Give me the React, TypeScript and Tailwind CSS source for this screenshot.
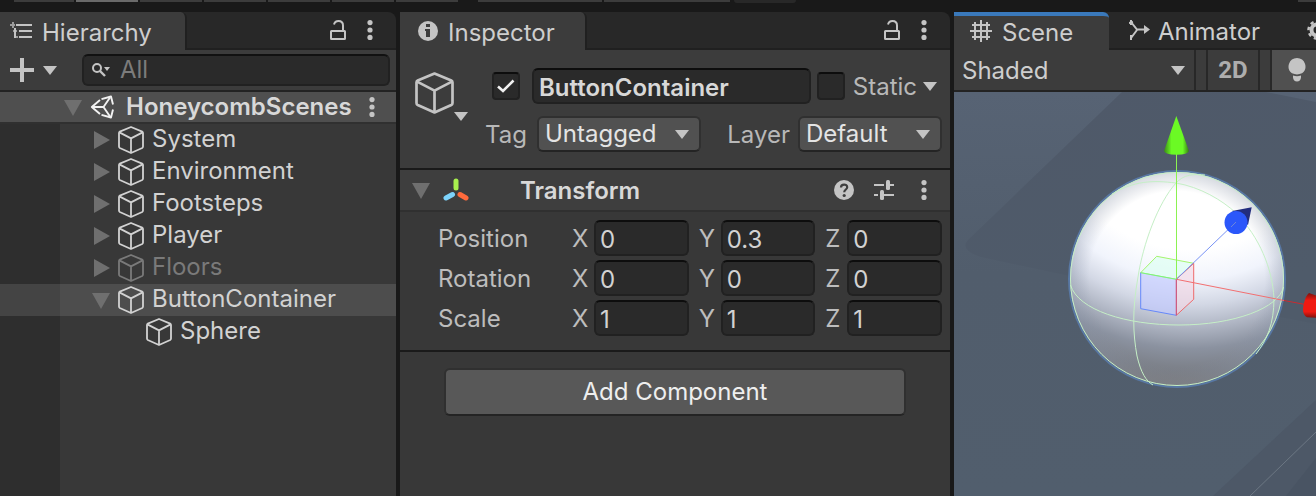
import { useState, type ReactNode } from "react";

const cx = (...names: string[]) => names.join(" ");

function CaretDown({ className = "" }: { className?: string }) {
  return (
    <svg viewBox="0 0 14 9" className={cx("h-[9px] w-[14px] shrink-0", className)} fill="#c4c4c4" aria-hidden="true">
      <path d="M0 0h14L7 9z" />
    </svg>
  );
}

function Foldout({ open, label, onClick }: { open: boolean; label: string; onClick?: () => void }) {
  return (
    <button type="button" aria-label={`Toggle ${label}`} aria-expanded={open} onClick={onClick} className="flex h-5 w-[18px] shrink-0 items-center justify-center">
      <svg viewBox="0 0 18 20" className="h-5 w-[18px]" fill="#6f6f6f" aria-hidden="true">
        {open ? <path d="M0 3h18L9 19z" /> : <path d="M2 1v18l16-9z" />}
      </svg>
    </button>
  );
}

function CubeIcon({ className }: { className: string }) {
  return (
    <svg viewBox="0 0 26 28" className={cx("shrink-0", className)} fill="none" stroke="currentColor" strokeWidth="1.8" strokeLinejoin="round" aria-hidden="true">
      <path d="M13 1 L24.2 5.6 Q25 6 25 7 V20.6 Q25 21.6 24.2 22 L13 27 L1.8 22 Q1 21.6 1 20.6 V7 Q1 6 1.8 5.6 Z" />
      <path d="M1.4 6.4 L13 12.4 L24.6 6.4 M13 12.4 V27" />
    </svg>
  );
}

function LockIcon() {
  return (
    <svg viewBox="0 0 16 20" className="h-5 w-4" fill="none" stroke="#c4c4c4" strokeWidth="2" aria-hidden="true">
      <rect x="1" y="11" width="14" height="8" rx="0.5" />
      <path d="M4 4.5C4.6 2 6.200 1 8.500 1C11.500 1 13 3 13 5.500V11" />
    </svg>
  );
}

function DotsIcon() {
  return (
    <svg viewBox="0 0 6 20" className="h-5 w-[6px]" fill="#c4c4c4" aria-hidden="true">
      <circle cx="3" cy="2.600" r="2.600" />
      <circle cx="3" cy="10" r="2.600" />
      <circle cx="3" cy="17.400" r="2.600" />
    </svg>
  );
}

function UnityLogo() {
  return (
    <svg viewBox="0 0 24 24" className="h-6 w-6 shrink-0" fill="none" stroke="#f2f2f2" strokeWidth="1.900" strokeLinejoin="round" aria-hidden="true">
      <path d="M10 5L1.800 12L10 19" />
      <path d="M11.500 4.200L21 1.500L23 9.500M11.500 19.800L21 22.500L23 14.500" />
      <path d="M2 12H13.500M13.500 12L20 2.500M13.500 12L20 21.500" />
    </svg>
  );
}

function IconButton({ label, children }: { label: string; children: ReactNode }) {
  return (
    <button type="button" aria-label={label} className="flex items-center justify-center">
      {children}
    </button>
  );
}

function TabActions() {
  return (
    <div className="ml-auto flex items-center gap-[21px] pr-[23px]">
      <IconButton label="Lock panel"><LockIcon /></IconButton>
      <IconButton label="Panel menu"><DotsIcon /></IconButton>
    </div>
  );
}

const segments = [
  { width: "w-[60px]", color: "bg-[#3c3c3c]" },
  { width: "w-[62px]", color: "bg-[#6a6a6a]" },
  { width: "w-[62px]", color: "bg-[#3c3c3c]" },
  { width: "w-[62px]", color: "bg-[#3c3c3c]" },
  { width: "w-[62px]", color: "bg-[#3c3c3c]" },
  { width: "w-[62px]", color: "bg-[#3c3c3c]" },
  { width: "w-[62px]", color: "bg-[#3c3c3c]" },
];

function ToolbarEdge() {
  return (
    <div className="flex h-3 shrink-0 items-start gap-[2px] pl-[14px]">
      {segments.map((s, i) => (
        <div key={i} className={cx("h-[2px]", s.width, s.color)} />
      ))}
      <div className="ml-[18px] h-[2px] w-[124px] bg-[#3c3c3c]" />
      <div className="h-[2px] w-[126px] bg-[#3c3c3c]" />
      <div className="ml-[2px] h-[3px] w-[62px] rounded-b bg-[#282828]" />
      <div className="ml-auto h-[2px] w-[18px] bg-[#3c3c3c]" />
    </div>
  );
}

type Item = { name: string; open?: boolean; leaf?: boolean; dim?: boolean; selected?: boolean };

const items: Item[] = [
  { name: "System" },
  { name: "Environment" },
  { name: "Footsteps" },
  { name: "Player" },
  { name: "Floors", dim: true },
  { name: "ButtonContainer", open: true, selected: true },
  { name: "Sphere", leaf: true },
];

function Hierarchy() {
  return (
    <section aria-label="Hierarchy" className="flex min-w-0 flex-col">
      <div className="flex h-[38px] rounded-tr-lg bg-[#282828]">
        <h2 className="flex w-[187px] items-center gap-[10px] rounded-tr-md border-r-2 border-[#202020] bg-[#3c3c3c] pl-[10px]">
          <svg viewBox="0 0 22 18" className="h-[18px] w-[22px]" fill="#c4c4c4" aria-hidden="true">
            <path d="M6 2h16v2H6zM9 8h13v2H9zM9 14h13v2H9zM4 6h2v10H4z" />
            <path d="M0 2h5v2H0zM2 0h2v6H2zM3 8h4v2H3zM5 14h3v2H5z" fillOpacity="0.7" />
          </svg>
          <span className="pt-1">Hierarchy</span>
        </h2>
        <div className="flex flex-1 items-center border-b-2 border-[#202020]"><TabActions /></div>
      </div>
      <div className="flex h-[42px] items-center border-b-2 border-[#232323] bg-[#3c3c3c] pl-[10px] pr-[6px]">
        <button type="button" aria-label="Create" className="flex items-center gap-[9px]">
          <svg viewBox="0 0 24 24" className="h-6 w-6" fill="#c4c4c4" aria-hidden="true"><path d="M10 0h4v10h10v4H14v10h-4V14H0v-4h10z" /></svg>
          <CaretDown />
        </button>
        <label className="ml-[25px] flex h-8 min-w-0 flex-1 items-center gap-[10px] rounded-md border-2 border-[#212121] border-t-[#111111] bg-[#2a2a2a] pl-2">
          <svg viewBox="0 0 18 14" className="h-[14px] w-[18px] shrink-0" aria-hidden="true">
            <circle cx="5" cy="5" r="4" fill="none" stroke="#c4c4c4" strokeWidth="2" />
            <path d="M8 8l5 5" stroke="#c4c4c4" strokeWidth="2.400" />
            <path d="M12 4h6l-3 4z" fill="#c4c4c4" />
          </svg>
          <input type="search" aria-label="Search hierarchy" placeholder="All" className="w-full min-w-0 bg-transparent outline-none placeholder:text-[#7c7c7c]" />
        </label>
      </div>
      <div className="flex h-8 items-center border-b-2 border-[#303030] bg-[#4f4f4f] pl-16 pr-[21px]">
        <Foldout open label="HoneycombScenes" />
        <span className="ml-2"><UnityLogo /></span>
        <span className="ml-3 truncate font-semibold text-[#d8d8d8]">HoneycombScenes</span>
        <span className="ml-auto flex"><IconButton label="Scene menu"><DotsIcon /></IconButton></span>
      </div>
      <ul className="flex flex-1 flex-col bg-[linear-gradient(to_right,#2e2e2e_60px,#383838_60px)]">
        {items.map((item) => (
          <li
            key={item.name}
            className={cx(
              "flex h-8 items-center",
              item.leaf ? "pl-[146px]" : "pl-[92px]",
              item.selected ? "bg-[linear-gradient(to_right,#444444_60px,#4d4d4d_60px)]" : "",
              item.dim ? "text-[#7a7a7a]" : "text-[#d2d2d2]",
            )}
          >
            {!item.leaf && <span className="mr-2 flex"><Foldout open={!!item.open} label={item.name} /></span>}
            <CubeIcon className="h-7 w-[26px]" />
            <span className="ml-2 pb-[2px]">{item.name}</span>
          </li>
        ))}
      </ul>
    </section>
  );
}

function Check({ label, initial }: { label: string; initial: boolean }) {
  const [on, setOn] = useState(initial);
  return (
    <span className="relative flex h-7 w-7 shrink-0">
      <input type="checkbox" aria-label={label} checked={on} onChange={() => setOn(!on)} className="h-7 w-7 appearance-none rounded border-2 border-[#212121] border-t-[#0d0d0d] bg-[#2a2a2a]" />
      {on && (
        <svg viewBox="0 0 28 28" className="pointer-events-none absolute inset-0 h-7 w-7" fill="none" stroke="#f0f0f0" strokeWidth="2.600" aria-hidden="true">
          <path d="M6 14.500L11 19L21.500 8.500" />
        </svg>
      )}
    </span>
  );
}

function Dropdown({ id, options, className }: { id: string; options: string[]; className: string }) {
  return (
    <span className={cx("relative flex h-9 items-center", className)}>
      <select id={id} className="h-9 w-full appearance-none rounded-md border-2 border-[#303030] border-b-[#242424] bg-[#515151] pl-[6px] pr-7 text-[#e4e4e4] outline-none">
        {options.map((o) => <option key={o}>{o}</option>)}
      </select>
      <CaretDown className="pointer-events-none absolute right-3" />
    </span>
  );
}

const vectors = [
  { name: "Position", values: ["0", "0.3", "0"] },
  { name: "Rotation", values: ["0", "0", "0"] },
  { name: "Scale", values: ["1", "1", "1"] },
];
const axes = ["X", "Y", "Z"];

function Inspector() {
  return (
    <section aria-label="Inspector" className="flex min-w-0 flex-col bg-[#383838]">
      <div className="flex h-[38px] bg-[#191919]">
        <div className="flex flex-1 rounded-tr-lg bg-[#282828]">
          <h2 className="flex w-[187px] items-center gap-[10px] rounded-tr-md border-r-2 border-[#202020] bg-[#3c3c3c] pl-[18px]">
            <svg viewBox="0 0 20 20" className="h-5 w-5" aria-hidden="true">
              <circle cx="10" cy="10" r="10" fill="#c4c4c4" />
              <path d="M8 3h4v3H8zM7 8h5v8H8v-6H7z" fill="#3c3c3c" />
            </svg>
            <span className="pt-1">Inspector</span>
          </h2>
          <div className="flex flex-1 items-center border-b-2 border-[#202020]"><TabActions /></div>
        </div>
      </div>

      <div className="flex border-b-2 border-[#1a1a1a] bg-[#3c3c3c] pb-4 pl-[15px] pr-2 pt-[18px]">
        <button type="button" aria-label="Object icon" className="flex w-[70px] shrink-0 items-start pt-1 text-[#c4c4c4]">
          <CubeIcon className="h-[42px] w-[39px]" />
          <CaretDown className="mt-10" />
        </button>
        <div className="flex min-w-0 flex-1 flex-col gap-3">
          <div className="flex items-center pl-[7px]">
            <Check label="Object active" initial />
            <input aria-label="Object name" defaultValue="ButtonContainer" className="ml-3 h-9 min-w-0 flex-1 rounded-md border-2 border-[#212121] border-t-[#0d0d0d] bg-[#2a2a2a] px-[5px] pt-[2px] font-semibold text-[#d8d8d8] outline-none" />
            <span className="ml-[6px] flex"><Check label="Static" initial={false} /></span>
            <button type="button" className="ml-2 flex items-center gap-[6px] pr-[5px] text-[#b8b8b8]">
              <span className="pt-[2px]">Static</span>
              <CaretDown />
            </button>
          </div>
          <div className="flex items-center justify-between text-[#b8b8b8]">
            <div className="flex items-center gap-[10px]">
              <label htmlFor="tag" className="pt-[2px]">Tag</label>
              <Dropdown id="tag" options={["Untagged", "Player"]} className="w-[164px]" />
            </div>
            <div className="flex items-center gap-2">
              <label htmlFor="layer" className="pt-[2px]">Layer</label>
              <Dropdown id="layer" options={["Default", "UI"]} className="w-[144px]" />
            </div>
          </div>
        </div>
      </div>

      <div className="flex h-[42px] items-center border-b-2 border-[#303030] bg-[#3e3e3e] pl-3 pr-[23px]">
        <Foldout open label="Transform" />
        <svg viewBox="0 0 26 24" className="ml-[13px] h-6 w-[26px]" strokeWidth="5" strokeLinecap="round" aria-hidden="true">
          <path d="M13 3V10" stroke="#a8f04e" />
          <path d="M9.500 16.500L3 20" stroke="#7dd3fb" />
          <path d="M17 16.500L23 20" stroke="#ff6a3c" />
        </svg>
        <h3 className="ml-[51px] pt-[2px] font-semibold text-[#d8d8d8]">Transform</h3>
        <div className="ml-auto flex items-center">
          <IconButton label="Help">
            <svg viewBox="0 0 20 20" className="h-5 w-5" fill="none" aria-hidden="true">
              <circle cx="10" cy="10" r="10" fill="#c4c4c4" />
              <path d="M7 7.500C7 3.500 13.200 3.700 13.200 7.200C13.200 9.500 10.200 9.500 10.200 12.300" stroke="#3e3e3e" strokeWidth="2.200" />
              <circle cx="10.200" cy="15.500" r="1.600" fill="#3e3e3e" />
            </svg>
          </IconButton>
          <span className="ml-5 flex">
            <IconButton label="Presets">
              <svg viewBox="0 0 20 20" className="h-5 w-5" fill="#c4c4c4" aria-hidden="true">
                <path d="M0 4h10v2H0zM15 4h5v2h-5zM0 14h4v2H0zM10 14h10v2H10z" />
                <rect x="12" y="0" width="4" height="10" rx="1.500" />
                <rect x="6" y="10" width="4" height="10" rx="1.500" />
              </svg>
            </IconButton>
          </span>
          <span className="ml-[27px] flex"><IconButton label="Component menu"><DotsIcon /></IconButton></span>
        </div>
      </div>

      <div className="flex flex-col gap-1 border-b-2 border-[#1a1a1a] pb-[14px] pl-[38px] pr-2 pt-2 text-[#bdbdbd]">
        {vectors.map((v) => (
          <div key={v.name} className="flex items-center">
            <span className="w-[134px] shrink-0 pt-[2px]">{v.name}</span>
            <div className="grid flex-1 grid-cols-3 gap-[10px]">
              {axes.map((axis, i) => (
                <label key={axis} className="flex min-w-0 items-center">
                  <span className="w-[22px] shrink-0 pt-[2px]">{axis}</span>
                  <input aria-label={`${v.name} ${axis}`} defaultValue={v.values[i]} className="h-9 w-full min-w-0 rounded-md border-2 border-[#212121] border-t-[#0d0d0d] bg-[#2a2a2a] px-1 pt-[2px] text-[#d2d2d2] outline-none" />
                </label>
              ))}
            </div>
          </div>
        ))}
      </div>

      <div className="px-11 pt-4">
        <button type="button" className="h-12 w-full rounded-md border-2 border-[#303030] border-b-[#242424] bg-[#585858] text-[#eeeeee]">
          Add Component
        </button>
      </div>
    </section>
  );
}

function Viewport() {
  return (
    <svg viewBox="0 0 362 404" preserveAspectRatio="xMinYMin slice" className="min-h-[404px] w-full flex-1" fill="none" role="img" aria-label="Scene viewport">
      <defs>
        <linearGradient id="ground" x1="0" y1="0" x2="0" y2="1">
          <stop offset="0" stopColor="#576374" />
          <stop offset="0.450" stopColor="#515d6c" />
          <stop offset="1" stopColor="#515e6d" />
        </linearGradient>
        <linearGradient id="shade" x1="0" y1="0" x2="0.300" y2="1">
          <stop offset="0" stopColor="#4f5969" />
          <stop offset="1" stopColor="#4f5b6a" />
        </linearGradient>
        <radialGradient id="ball" gradientUnits="userSpaceOnUse" cx="236" cy="20" r="275">
          <stop offset="0" stopColor="#ffffff" />
          <stop offset="0.500" stopColor="#ffffff" />
          <stop offset="0.610" stopColor="#f1f4fc" />
          <stop offset="0.700" stopColor="#d3d8e5" />
          <stop offset="0.780" stopColor="#b0b6c4" />
          <stop offset="0.860" stopColor="#8b92a0" />
          <stop offset="0.940" stopColor="#7b7f87" />
          <stop offset="1" stopColor="#757372" />
        </radialGradient>
        <radialGradient id="rim">
          <stop offset="0.820" stopColor="#8b95a8" stopOpacity="0" />
          <stop offset="1" stopColor="#8b95a8" stopOpacity="0.350" />
        </radialGradient>
        <linearGradient id="cone">
          <stop offset="0" stopColor="#3b8a17" />
          <stop offset="0.300" stopColor="#6bfa24" />
          <stop offset="0.750" stopColor="#6bfa24" />
          <stop offset="1" stopColor="#357b15" />
        </linearGradient>
        <linearGradient id="redCone" x1="0" y1="0" x2="0" y2="1">
          <stop offset="0" stopColor="#7b120d" />
          <stop offset="0.300" stopColor="#f01a12" />
          <stop offset="0.750" stopColor="#f01a12" />
          <stop offset="1" stopColor="#7b120d" />
        </linearGradient>
      </defs>
      <rect width="362" height="404" fill="url(#ground)" />
      <path d="M168 0H312L362 10V232L116 184L27 165Q5 158 14 148Z" fill="url(#shade)" />
      <path d="M362 308L259 404H362Z" fill="#4d5867" />
      <path d="M362 366L332 404H362Z" fill="#495463" />
      <path d="M362 340L296 404" stroke="#6c7783" strokeWidth="1" />

      <circle cx="223" cy="187" r="108" stroke="#5878a4" strokeWidth="2" />
      <circle cx="223" cy="187" r="107" fill="url(#ball)" />
      <circle cx="223" cy="187" r="107" fill="url(#rim)" />
      <g stroke="#c5efc6">
        <circle cx="223" cy="187" r="106.500" />
        <path d="M116.500 193C124 218 172 233 225 233C280 233 325 216 329.500 195" />
        <path d="M158 102C180 89 198 88 222 91C246 95 268 108 282 121C306 146 318 176 320 206C320 232 313 248 302 262" />
        <path d="M251 83C233 81 227 86 222 91C204 111 189 152 184 185C178 218 179 242 183 264C187 281 192 289 199 293" />
      </g>

      <path d="M186.700 180.700L202.700 164.300L239.700 171.300L222.300 187.300Z" fill="#d9fff0" fillOpacity="0.600" stroke="#a5f56e" />
      <path d="M222.300 187.300L239.700 171.300V207.300L222.300 223.300Z" fill="#f3d5e2" fillOpacity="0.600" stroke="#ee6a6c" />
      <path d="M186.700 180.700L222.300 187.300V223.300L186.700 216.700Z" fill="#c1caff" fillOpacity="0.650" />
      <path d="M186.700 180.700V216.700L222.300 223.300" stroke="#6688fa" />
      <path d="M186.700 180.700L222.300 187.300" stroke="#7bf47b" />
      <path d="M222.300 187.300V223.300" stroke="#c8507c" />

      <path d="M222.500 62V187" stroke="#8cf252" />
      <path d="M222.300 187.300L282 130" stroke="#7893f5" />
      <path d="M222.300 187.300L330 208.500" stroke="#f26f70" />
      <path d="M330 208.500L354 213" stroke="#c92b31" />
      <path d="M222.300 24L210 59Q211 62.700 222.500 62.700Q234 62.700 235 59Z" fill="url(#cone)" />
      <path d="M297.700 115.300L278 119L294 133Z" fill="#222d7e" />
      <circle cx="282" cy="130.500" r="11.500" fill="#2b57fa" />
      <path d="M277 135L282 130" stroke="#6f86d8" />
      <path d="M355 201L366 205V226L353 225.300Q347 222 350 211Q352 203 355 201Z" fill="url(#redCone)" />
    </svg>
  );
}

function Scene() {
  return (
    <section aria-label="Scene" className="flex min-w-0 flex-col overflow-hidden">
      <div className="flex h-[38px] bg-[#282828]">
        <h2 className="flex w-[155px] shrink-0 items-center gap-[10px] rounded-tr-md border-t-4 border-t-[#3a79bb] bg-[#3c3c3c] pb-1 pl-4">
          <svg viewBox="0 0 22 22" className="h-[22px] w-[22px]" stroke="#c4c4c4" strokeWidth="2" aria-hidden="true">
            <path d="M5 2V20M11 0V22M17 2V20M2 5H20M0 11H22M2 17H20" />
          </svg>
          <span className="pt-1">Scene</span>
        </h2>
        <div className="flex min-w-0 flex-1 items-center overflow-hidden border-b-2 border-[#202020] pl-5">
          <svg viewBox="0 0 22 20" className="h-5 w-[22px] shrink-0" fill="none" stroke="#c4c4c4" strokeWidth="2" aria-hidden="true">
            <path d="M2 2L8 9.500H18M2 18L8 10" />
            <path d="M2 0V5M2 15V20M0 3L4 2" />
            <path d="M15 5L21 9.500L15 14Z" fill="#c4c4c4" stroke="none" />
          </svg>
          <h2 className="ml-[7px] pt-1">Animator</h2>
          <svg viewBox="0 0 20 20" className="ml-[47px] h-5 w-5 shrink-0" fill="none" stroke="#c4c4c4" aria-hidden="true">
            <circle cx="10" cy="10" r="5.500" strokeWidth="4" />
            <circle cx="10" cy="10" r="8.500" strokeWidth="2.500" strokeDasharray="3.300 3.300" />
          </svg>
        </div>
      </div>
      <div className="flex h-[42px] border-b-2 border-[#232323] bg-[#3c3c3c]">
        <span className="relative flex min-w-0 flex-1 items-center border-r-2 border-[#282828]">
          <select aria-label="Draw mode" className="h-10 w-full appearance-none bg-transparent pl-2 pt-[2px] outline-none">
            <option>Shaded</option>
            <option>Wireframe</option>
          </select>
          <CaretDown className="pointer-events-none absolute right-[9px]" />
        </span>
        <button type="button" className="ml-[10px] w-[54px] shrink-0 border-x-2 border-[#282828] font-['Roboto'] font-bold text-[#adadad]">2D</button>
        <button type="button" aria-label="Scene lighting" className="ml-[10px] flex w-[46px] shrink-0 items-center border-l-2 border-[#282828] bg-[#505050] pl-4">
          <svg viewBox="0 0 18 24" className="h-6 w-[18px] shrink-0" fill="#c4c4c4" aria-hidden="true">
            <path d="M9 0A8.500 8.500 0 0 1 14 15.300Q9 17.500 4 15.300A8.500 8.500 0 0 1 9 0ZM5 17.500Q9 19 13 17.500V19.500Q12.500 23.500 9 23.500Q5.500 23.500 5 19.500Z" />
          </svg>
        </button>
      </div>
      <Viewport />
    </section>
  );
}

export default function App() {
  return (
    <main className="flex min-h-screen flex-col bg-[#191919] font-['Inter',sans-serif] text-2xl leading-8 text-[#cecece]">
      <ToolbarEdge />
      <div className="grid flex-1 grid-cols-[396fr_550fr_362fr] gap-1">
        <Hierarchy />
        <Inspector />
        <Scene />
      </div>
    </main>
  );
}
